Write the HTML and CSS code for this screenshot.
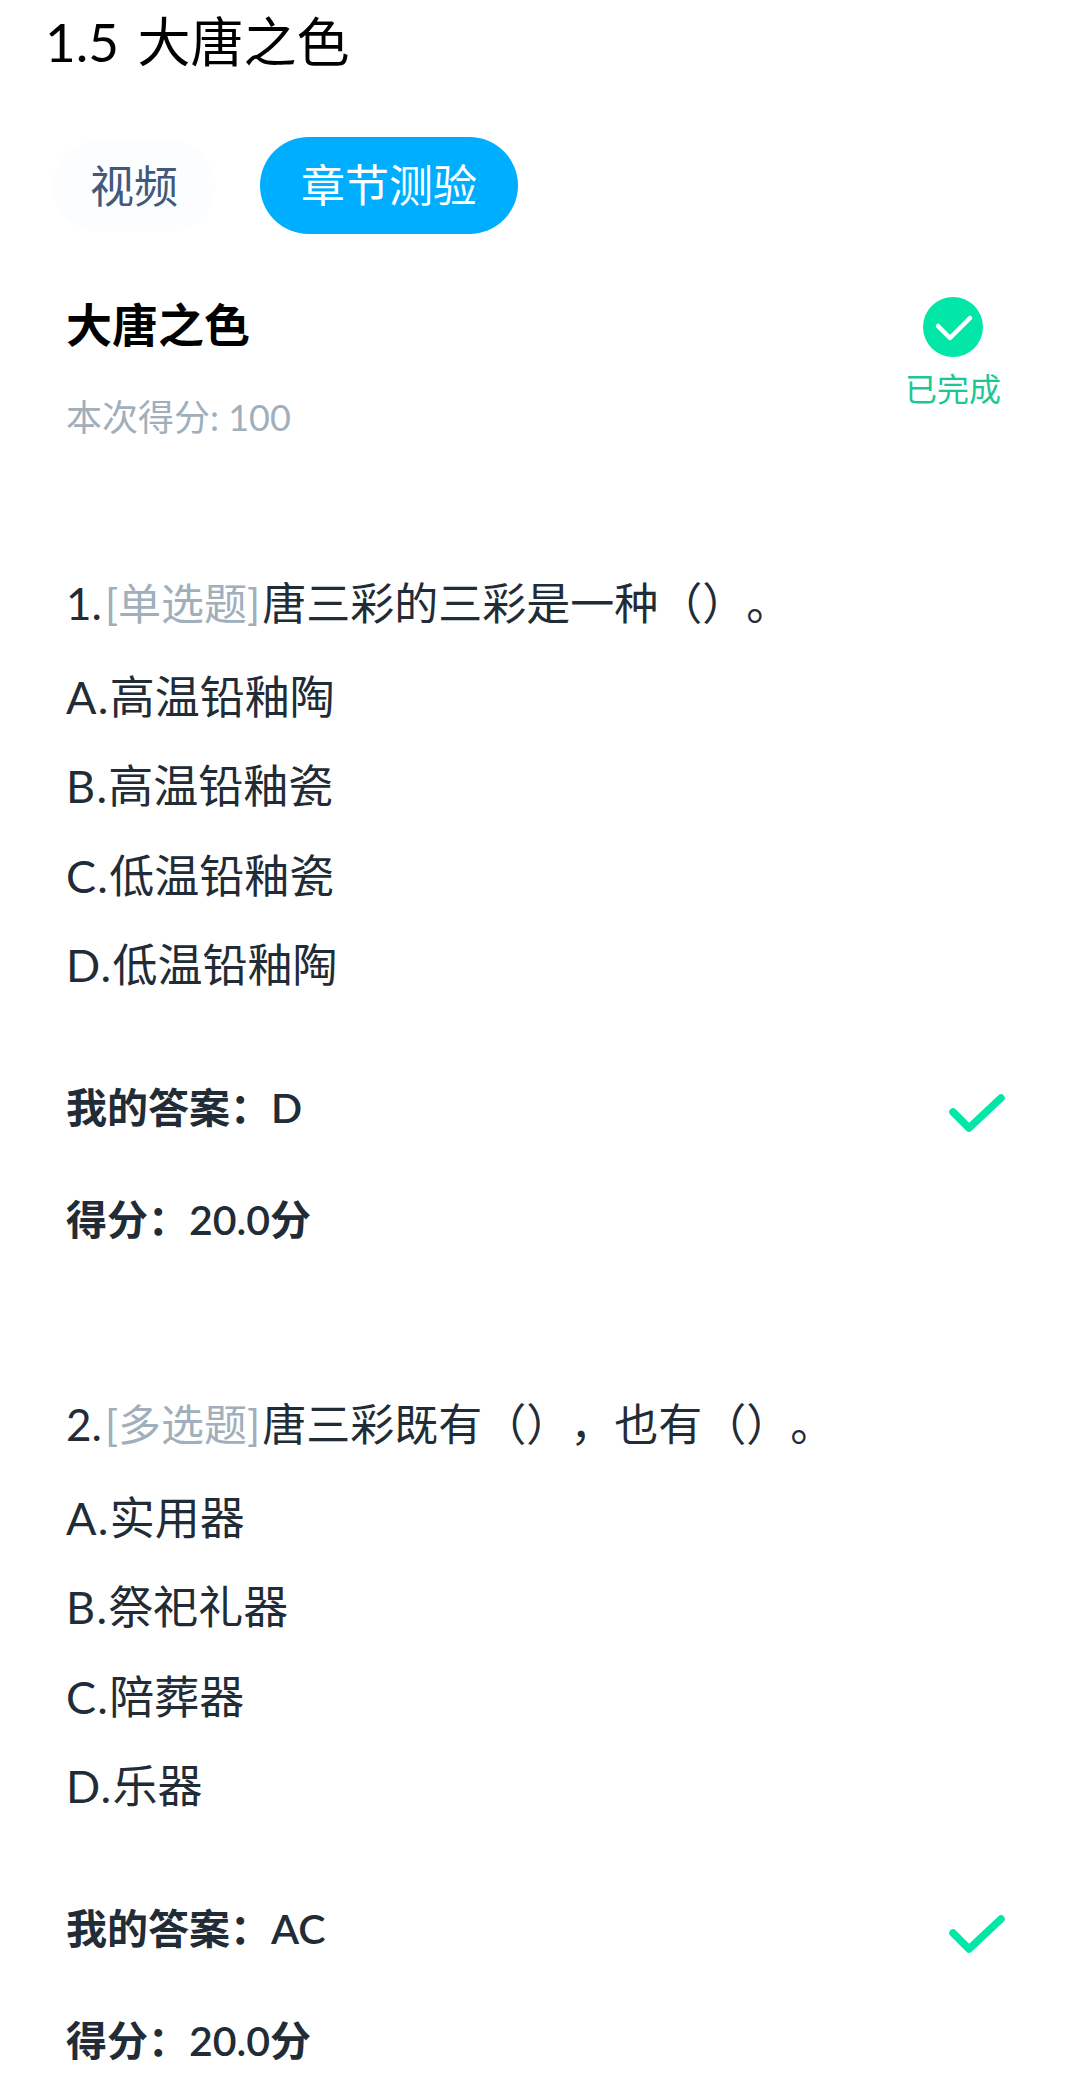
FILE: index.html
```html
<!DOCTYPE html>
<html lang="zh-CN">
<head>
<meta charset="utf-8">
<title>1.5 大唐之色</title>
<link rel="stylesheet" href="styles.css">
</head>
<body>
<h1 class="page-title">1.5 大唐之色</h1>
<nav class="tabs">
  <span class="tab">视频</span>
  <span class="tab tab-active">章节测验</span>
</nav>
<main class="content">
  <header class="quiz-head">
    <div>
      <h2 class="quiz-name">大唐之色</h2>
      <p class="quiz-score">本次得分: 100</p>
    </div>
    <div class="status">
      <svg class="status-icon" viewBox="0 0 60 60" aria-hidden="true">
        <circle cx="30" cy="30" r="30" fill="#02e6a7"/>
        <path d="M15 29 L27 41 L47 21" fill="none" stroke="#fff" stroke-width="4.5" stroke-linecap="round" stroke-linejoin="round"/>
      </svg>
      <span class="status-text">已完成</span>
    </div>
  </header>

  <section class="question">
    <p class="stem">1.<span class="kind">[单选题]</span>唐三彩的三彩是一种（）。</p>
    <ul class="options">
      <li><span class="opt-key">A.</span>高温铅釉陶</li>
      <li><span class="opt-key">B.</span>高温铅釉瓷</li>
      <li><span class="opt-key">C.</span>低温铅釉瓷</li>
      <li><span class="opt-key">D.</span>低温铅釉陶</li>
    </ul>
    <div class="answer">
      <span>我的答案：D</span>
      <svg class="tick" viewBox="0 0 60 44" aria-hidden="true">
        <path d="M5 20 L21 36 L53 6" fill="none" stroke="#02e6a7" stroke-width="7.5" stroke-linecap="round" stroke-linejoin="round"/>
      </svg>
    </div>
    <p class="points">得分：20.0分</p>
  </section>

  <section class="question">
    <p class="stem">2.<span class="kind">[多选题]</span>唐三彩既有（），也有（）。</p>
    <ul class="options">
      <li><span class="opt-key">A.</span>实用器</li>
      <li><span class="opt-key">B.</span>祭祀礼器</li>
      <li><span class="opt-key">C.</span>陪葬器</li>
      <li><span class="opt-key">D.</span>乐器</li>
    </ul>
    <div class="answer">
      <span>我的答案：AC</span>
      <svg class="tick" viewBox="0 0 60 44" aria-hidden="true">
        <path d="M5 20 L21 36 L53 6" fill="none" stroke="#02e6a7" stroke-width="7.5" stroke-linecap="round" stroke-linejoin="round"/>
      </svg>
    </div>
    <p class="points">得分：20.0分</p>
  </section>
</main>
</body>
</html>
```
FILE: styles.css
```css
* { box-sizing: border-box; }
html, body { margin: 0; padding: 0; background: #fff; }
body {
  width: 1078px;
  height: 2090px;
  overflow: hidden;
  font-family: "Lato", "Noto Sans CJK SC", sans-serif;
  color: #222c36;
  text-spacing-trim: space-all;
}
.page-title {
  margin: 0;
  padding-left: 45px;
  height: 84px;
  font-size: 53px;
  line-height: 84px;
  font-weight: 400;
  word-spacing: 5px;
  color: #000;
}
.tabs {
  display: flex;
  gap: 45px;
  padding: 53px 0 0 53px;
  align-items: center;
}
.tab {
  width: 162px;
  height: 92px;
  border-radius: 46px;
  background: #fbfdff;
  color: #42597c;
  font-size: 44px;
  line-height: 92px;
  text-align: center;
}
.tab-active {
  width: 258px;
  height: 97px;
  border-radius: 49px;
  line-height: 97px;
  background: #00aeff;
  color: #fff;
}
.content { padding: 0 66px; }
.quiz-head {
  display: flex;
  justify-content: space-between;
  padding-top: 59px;
}
.quiz-name {
  margin: 0;
  font-size: 46px;
  line-height: 64px;
  font-weight: 700;
  color: #000;
}
.quiz-score {
  margin: 35px 0 0;
  font-size: 36px;
  line-height: 50px;
  color: #a0afbb;
}
.status {
  display: flex;
  flex-direction: column;
  align-items: center;
  margin-right: 11px;
  padding-top: 4px;
}
.status-icon { width: 60px; height: 60px; display: block; }
.status-text {
  margin-top: 10px;
  font-size: 32px;
  line-height: 44px;
  color: #1cc796;
}
.question { padding-top: 131px; }
.question + .question { padding-top: 144px; }
.stem {
  margin: 0;
  font-size: 44px;
  line-height: 60px;
}
.kind { color: #a0afbb; font-size: 43px; margin: 0 2px 0 3px; }
.options {
  list-style: none;
  margin: 19px 0 0;
  padding: 0;
  font-size: 45px;
  line-height: 89.3px;
}
.opt-key { letter-spacing: 1.3px; }
.answer {
  display: flex;
  justify-content: space-between;
  align-items: center;
  margin-top: 68px;
  font-size: 41px;
  line-height: 60px;
  font-weight: 600;
}
.tick {
  width: 60px;
  height: 44px;
  margin-top: 12px;
  margin-right: 4px;
  display: block;
}
.points {
  margin: 52px 0 0;
  font-size: 41px;
  line-height: 60px;
  font-weight: 600;
}
```
